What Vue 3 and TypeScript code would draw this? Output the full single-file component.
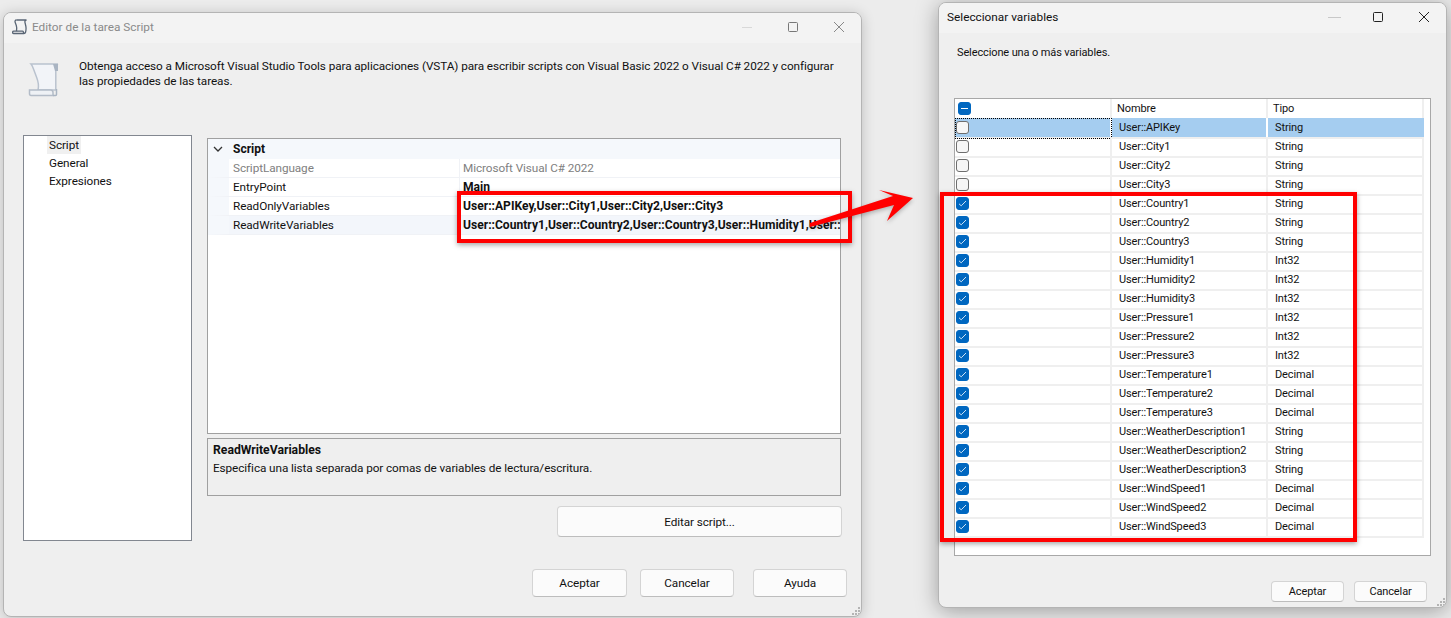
<script setup lang="ts">
interface Prop {
  name: string
  value: string
  dim?: boolean
  active?: boolean
}

const navItems = ['Script', 'General', 'Expresiones']

const props: Prop[] = [
  { name: 'ScriptLanguage', value: 'Microsoft Visual C# 2022', dim: true },
  { name: 'EntryPoint', value: 'Main' },
  { name: 'ReadOnlyVariables', value: 'User::APIKey,User::City1,User::City2,User::City3' },
  {
    name: 'ReadWriteVariables',
    value: 'User::Country1,User::Country2,User::Country3,User::Humidity1,User::Humidity2,User::Humidity3',
    active: true,
  },
]

const variables = [
  ['User::APIKey', 'String', false],
  ['User::City1', 'String', false],
  ['User::City2', 'String', false],
  ['User::City3', 'String', false],
  ['User::Country1', 'String', true],
  ['User::Country2', 'String', true],
  ['User::Country3', 'String', true],
  ['User::Humidity1', 'Int32', true],
  ['User::Humidity2', 'Int32', true],
  ['User::Humidity3', 'Int32', true],
  ['User::Pressure1', 'Int32', true],
  ['User::Pressure2', 'Int32', true],
  ['User::Pressure3', 'Int32', true],
  ['User::Temperature1', 'Decimal', true],
  ['User::Temperature2', 'Decimal', true],
  ['User::Temperature3', 'Decimal', true],
  ['User::WeatherDescription1', 'String', true],
  ['User::WeatherDescription2', 'String', true],
  ['User::WeatherDescription3', 'String', true],
  ['User::WindSpeed1', 'Decimal', true],
  ['User::WindSpeed2', 'Decimal', true],
  ['User::WindSpeed3', 'Decimal', true],
] as const
</script>

<template>
  <div class="desktop">
    <section class="window task-window">
      <header class="titlebar">
        <svg class="title-icon" width="16" height="16" viewBox="0 0 16 16" fill="none" stroke="#5a6675" stroke-width="1.300">
          <path d="M4.500 1h10c-1.400.3-1.800 1.300-1.500 2.600l.8 3.400c.4 2 .3 4-.2 6-.2.9-.8 1.500-1.700 1.500H1.800C1 14.500.6 14 .6 13.400c0-.7.500-1.200 1.200-1.200h8.700c.8 0 1.100.9.900 2.300" />
          <path d="M4.500 1C3.200 1 2.700 2.100 3.200 3.500l1.100 3c.5 1.600.6 3.600.2 5.700" />
        </svg>
        <span class="title-text muted">Editor de la tarea Script</span>
        <div class="controls">
          <svg width="10" height="10" viewBox="0 0 10 10"><path d="M0 5.500h10" stroke="#d8d8d8" /></svg>
          <svg width="10" height="10" viewBox="0 0 10 10" fill="none"><rect x=".5" y=".5" width="9" height="9" rx="1" stroke="#777" /></svg>
          <svg width="10" height="10" viewBox="0 0 10 10"><path d="M0 0l10 10M10 0L0 10" stroke="#888" /></svg>
        </div>
      </header>

      <div class="intro">
        <svg class="scroll-icon" width="32" height="34" viewBox="0 0 32 34">
          <path d="M3 1h27c-2 .5-2.600 2-2.200 4v22H10c1-4 .5-8-1.500-13L5.500 6C4.800 4 4 2 3 1z" fill="#f2f4f8" stroke="#b9c2ce" stroke-width="1.500" />
          <path d="M25 1h5v7h-3z" fill="#a9b4c2" />
          <path d="M1.500 27h21c1.500 0 2.500 1 2.500 2.500v3H3c-1 0-1.500-1-1.500-2z" fill="#eef1f5" stroke="#b3bcc8" stroke-width="1.500" />
          <path d="M25 32.500h2.500c.6 0 1-.4 1-1V26" fill="none" stroke="#a9b4c2" stroke-width="1.500" />
        </svg>
        <p class="intro-text">
          Obtenga acceso a Microsoft Visual Studio Tools para aplicaciones (VSTA) para escribir scripts con Visual Basic 2022 o Visual C# 2022 y configurar las propiedades de las tareas.
        </p>
      </div>

      <div class="main">
        <nav class="nav-list">
          <div v-for="(item, i) in navItems" :key="item" class="nav-item">
            <span :class="{ 'nav-current': i === 0 }">{{ item }}</span>
          </div>
        </nav>

        <div class="content">
          <div class="prop-grid">
            <div class="prop-category">
              <svg width="10" height="7" viewBox="0 0 10 7" fill="none"><path d="M1 1l4 4 4-4" stroke="#333" stroke-width="1.300" /></svg>
              <span>Script</span>
            </div>
            <div
              v-for="p in props"
              :key="p.name"
              class="prop-row"
              :class="{ dim: p.dim, active: p.active }"
            >
              <div class="prop-name">{{ p.name }}</div>
              <div class="prop-value">{{ p.value }}</div>
            </div>
          </div>

          <div class="prop-help">
            <strong>ReadWriteVariables</strong>
            <p>Especifica una lista separada por comas de variables de lectura/escritura.</p>
          </div>

          <button class="btn edit-btn">Editar script...</button>
        </div>
      </div>

      <footer class="task-footer">
        <button class="btn task-btn accept-btn">Aceptar</button>
        <button class="btn task-btn">Cancelar</button>
        <button class="btn task-btn help-btn">Ayuda</button>
      </footer>

      <svg class="grip" width="9" height="9" viewBox="0 0 9 9" fill="#b4b4b4">
        <rect x="6" y="0" width="2" height="2" /><rect x="3" y="3" width="2" height="2" /><rect x="6" y="3" width="2" height="2" />
        <rect x="0" y="6" width="2" height="2" /><rect x="3" y="6" width="2" height="2" /><rect x="6" y="6" width="2" height="2" />
      </svg>
    </section>

    <section class="window vars-window">
      <header class="titlebar vars-title">
        <span class="title-text">Seleccionar variables</span>
        <div class="controls vars-controls">
          <svg width="13" height="10" viewBox="0 0 13 10"><path d="M0 5.500h13" stroke="#c8c8c8" /></svg>
          <svg width="10" height="10" viewBox="0 0 10 10" fill="none"><rect x=".5" y=".5" width="9" height="9" rx="1" stroke="#222" /></svg>
          <svg class="close-icon" width="10" height="10" viewBox="0 0 10 10"><path d="M0 0l10 10M10 0L0 10" stroke="#222" /></svg>
        </div>
      </header>

      <p class="vars-intro">Seleccione una o más variables.</p>

      <div class="vars-grid">
        <div class="vars-row vars-head">
          <div class="cell check-cell">
            <span class="check on"><i class="dash" /></span>
          </div>
          <div class="cell head-cell">Nombre</div>
          <div class="cell head-cell">Tipo</div>
        </div>
        <div
          v-for="(v, i) in variables"
          :key="v[0]"
          class="vars-row"
          :class="{ selected: i === 0 }"
        >
          <div class="cell check-cell">
            <span class="check" :class="{ on: v[2] }">
              <svg v-if="v[2]" width="9" height="7" viewBox="0 0 9 7" fill="none"><path d="M1 3.800l2.200 2L8 1" stroke="#cfe3f5" /></svg>
            </span>
          </div>
          <div class="cell">{{ v[0] }}</div>
          <div class="cell">{{ v[1] }}</div>
        </div>
      </div>

      <footer class="vars-footer">
        <button class="btn vars-btn">Aceptar</button>
        <button class="btn vars-btn">Cancelar</button>
      </footer>

      <svg class="grip" width="9" height="9" viewBox="0 0 9 9" fill="#b4b4b4">
        <rect x="6" y="0" width="2" height="2" /><rect x="3" y="3" width="2" height="2" /><rect x="6" y="3" width="2" height="2" />
        <rect x="0" y="6" width="2" height="2" /><rect x="3" y="6" width="2" height="2" /><rect x="6" y="6" width="2" height="2" />
      </svg>
    </section>

    <!-- red annotations drawn over the two windows -->
    <div class="mark mark-left" />
    <div class="mark mark-right" />
    <svg class="arrow" width="120" height="50" viewBox="800 185 120 50">
      <path d="M810 223L893 196L879 190L913 198L887 221L894 205L810 227Z" fill="#ff0000" />
    </svg>
  </div>
</template>

<style>
html,
body {
  margin: 0;
  background: #ececec;
}
</style>

<style scoped>
.desktop {
  position: relative;
  width: 1451px;
  height: 618px;
  overflow: hidden;
  background: #ececec;
  color: #111;
  font-family: Roboto, 'Noto Sans', sans-serif;
  font-size: 12px;
}

.window {
  position: absolute;
  box-sizing: border-box;
  background: #efefef;
  border: 1px solid #b4b4b4;
  border-radius: 8px;
  overflow: hidden;
  box-shadow: 0 2px 14px rgba(0, 0, 0, 0.2);
}

.task-window {
  left: 3px;
  top: 12px;
  width: 859px;
  height: 605px;
  font-size: 11.75px;
  letter-spacing: -0.08px;
}

.vars-window {
  left: 938px;
  top: 2px;
  width: 509px;
  height: 606px;
  box-shadow: 0 3px 22px rgba(0, 0, 0, 0.34);
  font-size: 11px;
  letter-spacing: -0.12px;
}

.titlebar {
  display: flex;
  align-items: center;
  height: 30px;
  padding-left: 8px;
  background: #f3f3f3;
}

.title-icon {
  margin-right: 4px;
  margin-bottom: 2px;
}

.title-text {
  padding-bottom: 2px;
  font-size: 11.8px;
  letter-spacing: 0;
}

.muted {
  color: #8a8a8a;
}

.controls {
  display: flex;
  align-items: center;
  gap: 36px;
  margin-left: auto;
  padding-right: 17px;
  padding-bottom: 2px;
}

.vars-controls {
  gap: 32px;
}

.close-icon {
  margin-left: 4px;
}

.intro {
  display: flex;
  height: 92px;
  box-sizing: border-box;
  padding: 16px 0 0 24px;
}

.scroll-icon {
  margin-top: 4px;
  margin-right: 19px;
}

.intro-text {
  margin: 0;
  width: 770px;
  line-height: 15px;
}

.main {
  display: flex;
  align-items: flex-start;
  gap: 15px;
  padding-left: 19px;
}

.nav-list {
  box-sizing: border-box;
  width: 169px;
  height: 406px;
  background: #fff;
  border: 1px solid #828790;
}

.nav-item {
  height: 18px;
  padding-left: 25px;
  line-height: 18px;
}

.nav-current {
  display: inline-block;
  margin-left: -2px;
  padding: 0 2px;
  background: #f0f0f0;
}

.content {
  width: 634px;
  padding-top: 3px;
}

.prop-grid {
  box-sizing: border-box;
  height: 296px;
  background: #fff;
  border: 1px solid #a0a0a0;
}

.prop-category {
  display: flex;
  align-items: center;
  gap: 10px;
  height: 20px;
  padding-left: 5px;
  background: #f5f8fc;
  font-size: 12px;
  font-weight: 700;
  letter-spacing: 0;
}

.prop-row {
  display: flex;
  height: 19px;
  box-sizing: border-box;
  border-left: 21px solid #f5f8fc;
  border-bottom: 1px solid #f0f2f6;
  line-height: 18px;
}

.prop-row.active {
  background: #f3f6fb;
}

.prop-name {
  box-sizing: border-box;
  width: 231px;
  padding-left: 4px;
  border-right: 1px solid #f0f2f6;
}

.prop-value {
  flex: 1;
  min-width: 0;
  padding-left: 3px;
  overflow: hidden;
  white-space: nowrap;
  font-size: 12.1px;
  font-weight: 700;
  letter-spacing: 0;
}

.dim .prop-name,
.dim .prop-value {
  color: #808080;
  font-size: 11.75px;
  font-weight: 400;
  letter-spacing: -0.08px;
}

.prop-help {
  box-sizing: border-box;
  height: 58px;
  margin-top: 4px;
  padding: 3px 5px;
  border: 1px solid #a0a0a0;
}

.prop-help strong {
  display: block;
  font-size: 12.2px;
  line-height: 16px;
  letter-spacing: 0;
}

.prop-help p {
  margin: 2px 0 0;
  line-height: 16px;
}

.btn {
  box-sizing: border-box;
  padding: 0;
  background: #fbfbfb;
  border: 1px solid #d4d4d4;
  border-bottom-color: #bdbdbd;
  border-radius: 4px;
  color: #111;
  font: inherit;
  letter-spacing: inherit;
}

.edit-btn {
  display: block;
  width: 285px;
  height: 31px;
  margin: 10px 0 0 350px;
}

.task-footer {
  display: flex;
  gap: 13px;
  margin-top: 28px;
  padding-right: 14px;
  justify-content: flex-end;
}

.task-btn {
  width: 94px;
  height: 28px;
}

.accept-btn {
  width: 95px;
}

.help-btn {
  margin-left: 6px;
}

.vars-intro {
  margin: 12px 0 0 18px;
  line-height: 16px;
}

.vars-grid {
  box-sizing: border-box;
  width: 477px;
  height: 458px;
  margin: 37px 0 0 15px;
  background: #fff;
  border: 1px solid #a8a8a8;
}

.vars-row {
  display: grid;
  grid-template-columns: 157px 156px 156px;
  height: 19px;
}

.cell {
  box-sizing: border-box;
  padding-left: 7px;
  border-right: 2px solid #efefef;
  border-bottom: 2px solid #efefef;
  line-height: 19px;
  white-space: nowrap;
}

.head-cell {
  padding-left: 5px;
}

.vars-head .cell {
  border-bottom: 0;
}

.check-cell {
  display: flex;
  align-items: center;
  padding-left: 1px;
}

.vars-head .check-cell {
  padding-left: 3px;
}

.selected .cell {
  background: #a5cdf0;
  border-right-color: #fff;
}

.selected .cell:last-child {
  border-right-color: #a5cdf0;
}

.selected .check-cell {
  outline: 1px dotted #000;
  outline-offset: -1px;
}

.check {
  display: flex;
  align-items: center;
  justify-content: center;
  box-sizing: border-box;
  width: 13px;
  height: 13px;
  background: #f6f6f6;
  border: 1px solid #6e6e6e;
  border-radius: 3px;
}

.check.on {
  background: #0067c0;
  border-color: #0067c0;
}

.dash {
  display: block;
  width: 7px;
  height: 1px;
  background: #fff;
}

.vars-footer {
  display: flex;
  justify-content: flex-end;
  gap: 10px;
  margin-top: 25px;
  padding-right: 19px;
}

.vars-btn {
  width: 73px;
  height: 21px;
}

.grip {
  position: absolute;
  right: 0;
  bottom: 0;
}

.mark {
  position: absolute;
  box-sizing: border-box;
  border: 4px solid #ff0000;
  box-shadow: 0 2px 5px rgba(0, 0, 0, 0.35);
}

.mark-left {
  left: 457px;
  top: 191px;
  width: 395px;
  height: 52px;
}

.mark-right {
  left: 940px;
  top: 192px;
  width: 417px;
  height: 350px;
}

.arrow {
  position: absolute;
  left: 800px;
  top: 185px;
  filter: drop-shadow(0 2px 2px rgba(0, 0, 0, 0.25));
}
</style>
